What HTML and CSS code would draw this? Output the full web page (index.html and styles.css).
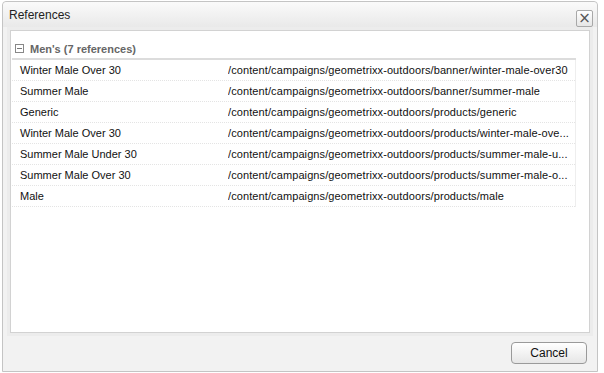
FILE: index.html
```html
<!doctype html>
<html lang="en">
<head>
    <meta charset="UTF-8">
    <title>References</title>
    <link rel="stylesheet" href="styles.css">
</head>
<body>
    <div class="dialog">
        <div class="header">
            <span class="title">References</span>
            <span class="close">&times;</span>
        </div>
        <div class="body">
            <div class="panel">
                <div class="group">
                    <span class="toggle"></span>
                    <b>Men's (7 references)</b>
                </div>
                <div class="grid">
                    <div class="row"><span class="name">Winter Male Over 30</span><span class="path">/content/campaigns/geometrixx-outdoors/banner/winter-male-over30</span></div>
                    <div class="row"><span class="name">Summer Male</span><span class="path">/content/campaigns/geometrixx-outdoors/banner/summer-male</span></div>
                    <div class="row"><span class="name">Generic</span><span class="path">/content/campaigns/geometrixx-outdoors/products/generic</span></div>
                    <div class="row"><span class="name">Winter Male Over 30</span><span class="path">/content/campaigns/geometrixx-outdoors/products/winter-male-ove...</span></div>
                    <div class="row"><span class="name">Summer Male Under 30</span><span class="path">/content/campaigns/geometrixx-outdoors/products/summer-male-u...</span></div>
                    <div class="row"><span class="name">Summer Male Over 30</span><span class="path">/content/campaigns/geometrixx-outdoors/products/summer-male-o...</span></div>
                    <div class="row"><span class="name">Male</span><span class="path">/content/campaigns/geometrixx-outdoors/products/male</span></div>
                </div>
            </div>
        </div>
        <div class="footer">
            <span class="btn">Cancel</span>
        </div>
    </div>
</body>
</html>
```

FILE: styles.css
```css
* {
    margin: 0;
    padding: 0;
    box-sizing: border-box;
}
body {
    background: #fff;
    font: 11px "Liberation Sans", Arial, sans-serif;
    color: #111;
}
.dialog {
    width: 596px;
    height: 371px;
    margin: 1px 0 0 2px;
    border: 1px solid #c4c4c4;
    border-radius: 4px 4px 0 0;
    background-color: #f2f2f2;
    display: flex;
    flex-direction: column;
}
.header {
    height: 26px;
    display: flex;
    align-items: center;
    justify-content: space-between;
    padding: 0 4px 0 6px;
    background: linear-gradient(#fafafa, #e9e9e9);
    border-radius: 4px 4px 0 0;
}
.title {
    font-size: 12px;
    color: #222;
}
.close {
    width: 17px;
    height: 17px;
    border: 1px solid #a8a8a8;
    border-radius: 2px;
    background: linear-gradient(#fff, #e6e6e6);
    font: 15px/14px "DejaVu Sans", sans-serif;
    text-align: center;
    color: #555;
    margin-top: 8px;
}
.body {
    flex: 1;
    padding: 0 5px;
}
.panel {
    height: 303px;
    border: 1px solid #d2d2d2;
    box-shadow: 0 0 0 3px #ececec;
    margin: 3px 2px 2px;
    background-color: #fff;
    padding: 8px 13px 0 1px;
}
.group {
    height: 21px;
    display: flex;
    align-items: center;
    padding-left: 3px;
    border-bottom: 2px solid #dcdcdc;
    color: #666;
}
.group b {
    font-weight: bold;
    margin-left: 6px;
}
.toggle {
    width: 9px;
    height: 9px;
    border: 1px solid #888;
    background: linear-gradient(#777, #777) center / 5px 1px no-repeat, #fff;
}
.grid {
    border-right: 1px solid #eee;
}
.row {
    height: 21px;
    display: flex;
    align-items: center;
    border-bottom: 1px dotted #e4e4e4;
}
.name {
    width: 216px;
    padding-left: 8px;
    flex-shrink: 0;
}
.path {
    flex: 1;
    white-space: nowrap;
    overflow: hidden;
    text-overflow: ellipsis;
    letter-spacing: 0.1px;
}
.footer {
    height: 40px;
    display: flex;
    justify-content: flex-end;
    align-items: center;
    padding: 0 10px 1px 0;
}
.btn {
    width: 76px;
    height: 22px;
    border: 1px solid #9a9a9a;
    border-radius: 4px;
    background: linear-gradient(#fff, #e6e6e6);
    font-size: 12px;
    line-height: 20px;
    text-align: center;
    color: #111;
}
```
